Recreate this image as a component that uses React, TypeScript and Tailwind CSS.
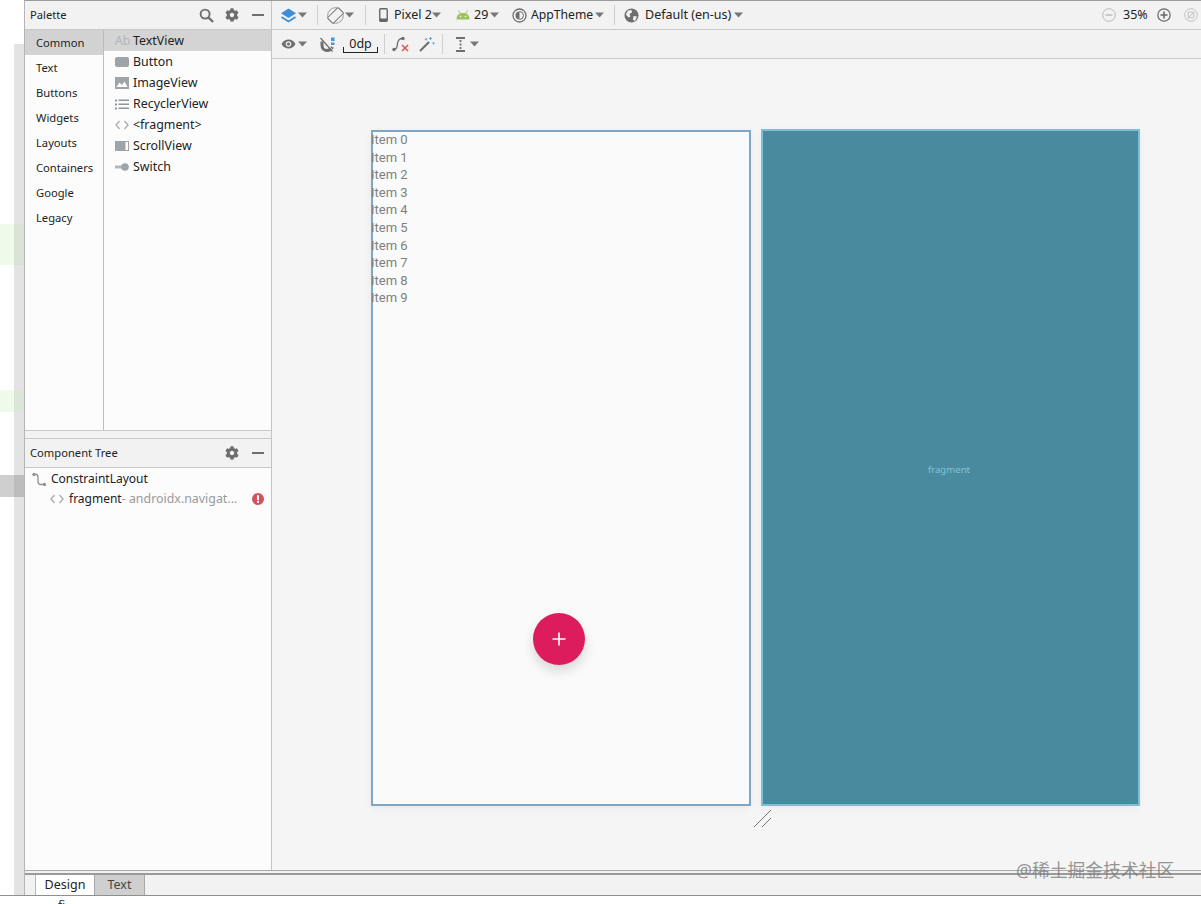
import React from 'react';
import { FaCog } from 'react-icons/fa';

const categories = ['Common', 'Text', 'Buttons', 'Widgets', 'Layouts', 'Containers', 'Google', 'Legacy'];
const items = ['TextView', 'Button', 'ImageView', 'RecyclerView', '<fragment>', 'ScrollView', 'Switch'];
const listItems = ['Item 0', 'Item 1', 'Item 2', 'Item 3', 'Item 4', 'Item 5', 'Item 6', 'Item 7', 'Item 8', 'Item 9'];

const gutter = [
  { h: 'h-[44px]', left: 'bg-white', right: 'bg-white' },
  { h: 'h-[180px]', left: 'bg-white', right: 'bg-[#e3e3e3]' },
  { h: 'h-[41px]', left: 'bg-[#eefbea]', right: 'bg-[#d8e2d5]' },
  { h: 'h-[125px]', left: 'bg-white', right: 'bg-[#e3e3e3]' },
  { h: 'h-[22px]', left: 'bg-[#eefbea]', right: 'bg-[#dbe6d8]' },
  { h: 'h-[63px]', left: 'bg-white', right: 'bg-[#e3e3e3]' },
  { h: 'h-[22px]', left: 'bg-[#cfcfcf]', right: 'bg-[#bdbdbd]' },
  { h: 'flex-1', left: 'bg-white', right: 'bg-[#e3e3e3]' },
];

const Caret = ({ className = '' }: { className?: string }) => (
  <svg width="9" height="6" viewBox="0 0 9 6" className={`shrink-0 ${className}`}>
    <path d="M0 0.5H9L4.5 5.5Z" fill="#777" />
  </svg>
);

const Sep = ({ className = '' }: { className?: string }) => <div className={`w-px h-[20px] bg-[#cfcfcf] shrink-0 ${className}`} />;

const Search = () => (
  <svg width="15" height="15" viewBox="0 0 16 16">
    <circle cx="6.5" cy="6.5" r="4.8" fill="none" stroke="#6e6e6e" strokeWidth="2" />
    <path d="M10 10L15 15" stroke="#6e6e6e" strokeWidth="2.4" />
  </svg>
);

const Minus = () => <div className="w-[12px] h-[2px] bg-[#6e6e6e]" />;

const Chevrons = () => (
  <svg width="14" height="10" viewBox="0 0 14 10">
    <path d="M4.5 1L1 5L4.5 9M9.5 1L13 5L9.5 9" fill="none" stroke="#a8acb0" strokeWidth="1.3" />
  </svg>
);

const PaletteIcon = ({ name }: { name: string }) => {
  if (name === 'TextView') return <span className="w-[14px] text-[12px] leading-none text-[#b0b4b8] whitespace-nowrap">Ab</span>;
  if (name === 'Button') return <div className="w-[14px] h-[10px] rounded-[2px] bg-[#9ea5aa]" />;
  if (name === 'ImageView')
    return (
      <svg width="14" height="12" viewBox="0 0 14 12">
        <rect width="14" height="12" fill="#9ea5aa" />
        <path d="M1.5 10L4.5 5.5L7 8L9.5 4.5L12.5 10Z" fill="#fff" />
      </svg>
    );
  if (name === 'RecyclerView')
    return (
      <svg width="14" height="11" viewBox="0 0 14 11" fill="#8f969b">
        <rect y="0.5" width="2" height="2" />
        <rect x="3.5" y="0.5" width="10.5" height="1.5" />
        <rect y="4.5" width="2" height="2" />
        <rect x="3.5" y="4.5" width="10.5" height="1.5" />
        <rect y="8.5" width="2" height="2" />
        <rect x="3.5" y="8.5" width="10.5" height="1.5" />
      </svg>
    );
  if (name === '<fragment>') return <Chevrons />;
  if (name === 'ScrollView')
    return (
      <svg width="14" height="10" viewBox="0 0 14 10">
        <rect width="14" height="10" fill="#9ea5aa" />
        <rect x="10.5" y="1" width="2.5" height="8" fill="#fff" />
      </svg>
    );
  return (
    <svg width="14" height="8" viewBox="0 0 14 8">
      <rect y="2.5" width="7" height="3" fill="#b3b8bc" />
      <circle cx="10" cy="4" r="3.8" fill="#9ea5aa" />
    </svg>
  );
};

const Toolbar = () => (
  <div className="h-[29px] flex items-center pl-[8px] pr-[3px] bg-[#f2f2f2] border-b border-[#c9c9c9] text-[12.5px] text-[#222] whitespace-nowrap">
    <svg width="17" height="15" viewBox="0 0 17 15" className="shrink-0">
      <path d="M8.5 0.5L16 5.3L8.5 10L1 5.3Z" fill="#3a8fd6" />
      <path d="M1.5 9L8.5 13.5L15.5 9" fill="none" stroke="#3a8fd6" strokeWidth="1.8" />
    </svg>
    <Caret className="ml-[1px]" />
    <Sep className="ml-[10px]" />
    <svg width="17" height="17" viewBox="0 0 17 17" className="ml-[9px] shrink-0">
      <circle cx="8.5" cy="8.5" r="7.8" fill="none" stroke="#999" />
      <rect x="4.5" y="1" width="8" height="15" rx="1" transform="rotate(45 8.5 8.5)" fill="#f2f2f2" stroke="#777" />
    </svg>
    <Caret className="ml-[1px]" />
    <Sep className="ml-[11px]" />
    <svg width="9" height="14" viewBox="0 0 9 14" className="ml-[13px] shrink-0">
      <rect x="0.75" y="0.75" width="7.5" height="12.5" rx="1" fill="none" stroke="#666" strokeWidth="1.4" />
      <rect x="1" y="10.5" width="7" height="2.5" fill="#666" />
    </svg>
    <span className="ml-[6px] w-[38px] pt-px">Pixel 2</span>
    <Caret />
    <svg width="14" height="10" viewBox="0 0 14 10" className="ml-[15px] shrink-0">
      <path d="M0.5 9.5C0.5 5 3 3 7 3C11 3 13.5 5 13.5 9.5Z" fill="#9cc45c" />
      <path d="M2.5 0.5L4.5 3.5M11.5 0.5L9.5 3.5" stroke="#9cc45c" />
      <circle cx="4.5" cy="6.5" r="0.8" fill="#f2f2f2" />
      <circle cx="9.5" cy="6.5" r="0.8" fill="#f2f2f2" />
    </svg>
    <span className="ml-[4px] w-[15px] pt-px">29</span>
    <Caret className="ml-[1px]" />
    <svg width="15" height="15" viewBox="0 0 15 15" className="ml-[13px] shrink-0">
      <circle cx="7.5" cy="7.5" r="6.5" fill="none" stroke="#6e6e6e" strokeWidth="1.3" />
      <path d="M7.5 3.5A4 4 0 0 0 7.5 11.5Z" fill="#6e6e6e" />
      <path d="M7.5 3.5A4 4 0 0 1 7.5 11.5" fill="none" stroke="#6e6e6e" />
    </svg>
    <span className="ml-[4px] w-[64px] pt-px text-[12.2px]">AppTheme</span>
    <Caret />
    <Sep className="ml-[10px]" />
    <svg width="15" height="15" viewBox="0 0 15 15" className="ml-[9px] shrink-0">
      <circle cx="7.5" cy="7.5" r="7" fill="#6e6e6e" />
      <path d="M4 2.5L7.5 2L8 4.5L5.5 6L6.5 8.5L4.5 9.5L1.8 6.5ZM9.5 8L13 8.5L11 13L9 12Z" fill="#f2f2f2" />
    </svg>
    <span className="ml-[6px] w-[85px] pt-px">Default (en-us)</span>
    <Caret className="ml-[4px]" />
    <div className="flex-1" />
    <svg width="14" height="14" viewBox="0 0 14 14" className="shrink-0">
      <circle cx="7" cy="7" r="6.3" fill="none" stroke="#b8b8b8" />
      <path d="M3.5 7H10.5" stroke="#b8b8b8" strokeWidth="1.4" />
    </svg>
    <span className="ml-[7px] w-[27px] pt-px">35%</span>
    <svg width="14" height="14" viewBox="0 0 14 14" className="ml-[7px] shrink-0">
      <circle cx="7" cy="7" r="6.2" fill="none" stroke="#666" strokeWidth="1.2" />
      <path d="M3.5 7H10.5M7 3.5V10.5" stroke="#666" strokeWidth="1.5" />
    </svg>
    <svg width="14" height="14" viewBox="0 0 14 14" className="ml-[13px] shrink-0">
      <circle cx="7" cy="7" r="6.3" fill="none" stroke="#c2c2c2" />
      <rect x="4.2" y="4.2" width="5.6" height="5.6" fill="none" stroke="#c2c2c2" />
      <path d="M5 9L9 5" stroke="#c2c2c2" />
    </svg>
  </div>
);

const SubToolbar = () => (
  <div className="h-[29px] flex items-center pl-[9px] bg-[#f2f2f2] border-b border-[#c9c9c9] text-[12.5px] text-[#222]">
    <svg width="15" height="10" viewBox="0 0 15 10" className="shrink-0">
      <path d="M0.5 5C2.5 1.5 5 0.5 7.5 0.5C10 0.5 12.5 1.5 14.5 5C12.5 8.5 10 9.5 7.5 9.5C5 9.5 2.5 8.5 0.5 5Z" fill="#6e6e6e" />
      <circle cx="7.5" cy="5" r="2.8" fill="#f2f2f2" />
      <circle cx="7.5" cy="5" r="1.6" fill="#6e6e6e" />
    </svg>
    <Caret className="ml-[2px]" />
    <svg width="15" height="15" viewBox="0 0 15 15" className="ml-[13px] shrink-0">
      <path d="M2 4.5V8.5C2 11.5 4.5 13.5 7 13.5C9.5 13.5 11.5 12 12.5 10" fill="none" stroke="#6e6e6e" strokeWidth="3" />
      <path d="M1 0.5L13.5 14" stroke="#f2f2f2" strokeWidth="1" />
      <path d="M0.5 1L12.5 14.5" stroke="#6e6e6e" strokeWidth="1.2" />
      <rect x="11" y="0.5" width="3.5" height="3.5" fill="#3a9bdc" />
      <rect x="11" y="5.5" width="3.5" height="2.5" fill="#3a9bdc" />
    </svg>
    <div className="ml-[8px] w-[35px] h-[17px] relative shrink-0 text-center leading-[15px] border-b border-[#222]">
      0dp
      <div className="absolute left-0 bottom-0 w-px h-[5px] bg-[#222]" />
      <div className="absolute right-0 bottom-0 w-px h-[5px] bg-[#222]" />
    </div>
    <Sep className="ml-[6px]" />
    <svg width="17" height="16" viewBox="0 0 17 16" className="ml-[7px] shrink-0">
      <path d="M1.5 13.5C5 13.5 5 11 5.5 7.5C6 4 7 2.5 10.5 2.5" fill="none" stroke="#6e6e6e" strokeWidth="1.3" />
      <circle cx="2" cy="13.5" r="1.7" fill="#6e6e6e" />
      <circle cx="11" cy="2.5" r="1.7" fill="#6e6e6e" />
      <path d="M10 9L16 15M16 9L10 15" stroke="#e0555c" strokeWidth="1.6" />
    </svg>
    <svg width="16" height="16" viewBox="0 0 16 16" className="ml-[10px] shrink-0">
      <path d="M1 15L10 6" stroke="#6e6e6e" strokeWidth="2.2" />
      <path d="M11.5 1V4M10 2.5H13M14.5 6V8.5M13.3 7.2H15.7" stroke="#58aee0" />
      <path d="M7 2V4.5M5.8 3.2H8.2" stroke="#9a9a9a" />
    </svg>
    <Sep className="ml-[7px]" />
    <svg width="11" height="15" viewBox="0 0 11 15" className="ml-[12px] shrink-0">
      <path d="M1 1H10M1 14H10" stroke="#6e6e6e" strokeWidth="1.8" />
      <path d="M5.5 3V12" stroke="#6e6e6e" strokeWidth="1.8" strokeDasharray="2 1.5" />
    </svg>
    <Caret className="ml-[4px]" />
  </div>
);

const PanelHeader = ({ title, search }: { title: string; search?: boolean }) => (
  <div className="h-[28px] flex items-center pl-[5px] bg-[#f2f2f2] text-[#222] text-[11.2px] shrink-0">
    <span className="flex-1 pt-px">{title}</span>
    {search && <Search />}
    <FaCog className="ml-[11px] w-[14px] h-[14px] text-[#6e6e6e]" />
    <div className="ml-[13px] mr-[7px]">
      <Minus />
    </div>
  </div>
);

export default function App() {
  return (
    <div className="relative w-[1201px] h-[904px] overflow-hidden bg-white font-['Noto_Sans',sans-serif]">
      <div className="flex h-[895px]">
        <div className="w-[24px] flex flex-col shrink-0">
          {gutter.map((g, i) => (
            <div key={i} className={`flex ${g.h}`}>
              <div className={`w-[14px] ${g.left}`} />
              <div className={`w-[10px] ${g.right}`} />
            </div>
          ))}
        </div>

        <div className="flex-1 flex flex-col border-t border-[#9a9a9a] border-l border-l-[#b5b5b5]">
          <div className="flex h-[869px]">
            <div className="w-[247px] flex flex-col border-r border-[#c4c4c4] bg-[#fcfcfc] shrink-0">
              <PanelHeader title="Palette" search />
              <div className="h-[402px] flex border-y border-[#c9c9c9] shrink-0">
                <div className="w-[79px] border-r border-[#bdbdbd] text-[11.2px] text-[#222]">
                  {categories.map((c, i) => (
                    <div key={c} className={`h-[25px] flex items-center pl-[11px] pt-px ${i === 0 ? 'bg-[#d2d2d2]' : ''}`}>
                      {c}
                    </div>
                  ))}
                </div>
                <div className="flex-1 text-[12.4px] text-[#222]">
                  {items.map((it, i) => (
                    <div key={it} className={`h-[21px] flex items-center pl-[11px] pt-px ${i === 0 ? 'bg-[#d4d4d4]' : ''}`}>
                      <div className="w-[18px] flex items-center">
                        <PaletteIcon name={it} />
                      </div>
                      <span>{it}</span>
                    </div>
                  ))}
                </div>
              </div>
              <div className="h-[8px] bg-[#f2f2f2] border-b border-[#c9c9c9] shrink-0" />
              <PanelHeader title="Component Tree" />
              <div className="flex-1 border-t border-[#c9c9c9] text-[12px] text-[#222] whitespace-nowrap">
                <div className="h-[20px] mt-[1px] flex items-center pl-[7px]">
                  <svg width="15" height="15" viewBox="0 0 15 15" className="shrink-0">
                    <path d="M2 2.5H4.5C6 2.5 6 4 6 7V9.5C6 11.5 7 12.5 9 12.5H12" fill="none" stroke="#8e9498" strokeWidth="1.3" />
                    <circle cx="2" cy="2.5" r="1.7" fill="#8e9498" />
                    <circle cx="12.5" cy="12.5" r="1.7" fill="#8e9498" />
                  </svg>
                  <span className="ml-[4px]">ConstraintLayout</span>
                </div>
                <div className="h-[20px] flex items-center pl-[25px]">
                  <Chevrons />
                  <span className="ml-[5px]">fragment</span>
                  <span className="text-[#9a9a9a] text-[12.4px] w-[116px]">- androidx.navigat...</span>
                  <svg width="12" height="12" viewBox="0 0 12 12" className="ml-[14px] shrink-0">
                    <circle cx="6" cy="6" r="6" fill="#d2525e" />
                    <rect x="5" y="2.2" width="2" height="5" fill="#fff" />
                    <rect x="5" y="8" width="2" height="2" fill="#fff" />
                  </svg>
                </div>
              </div>
            </div>

            <div className="flex-1 flex flex-col bg-[#f5f5f5] min-w-0">
              <Toolbar />
              <SubToolbar />
              <div className="flex-1 flex items-start gap-[10px] pl-[99px] pt-[70px]">
                <div className="relative w-[380px] h-[676px] mt-px border-2 border-[#7ea6c8] bg-[#fafafa] shadow-[0_2px_8px_rgba(0,0,0,0.05)] shrink-0">
                  <div className="text-[13px] leading-[17.6px] text-[#7f7f7f] -mt-px -ml-[2px] font-['Roboto',sans-serif]">
                    {listItems.map(t => (
                      <div key={t}>{t}</div>
                    ))}
                  </div>
                  <div className="absolute left-[160px] top-[481px] w-[52px] h-[52px] rounded-full bg-[#dc1c5c] shadow-[0_6px_12px_rgba(0,0,0,0.14)] flex items-center justify-center">
                    <svg width="14" height="14" viewBox="0 0 14 14">
                      <path d="M7 0.5V13.5M0.5 7H13.5" stroke="#fff" strokeWidth="1.6" />
                    </svg>
                  </div>
                  <svg width="20" height="20" viewBox="0 0 20 20" className="absolute left-[380px] top-[677px]">
                    <path d="M1 18L18 1M9 18L18 9" stroke="#555" strokeWidth="0.8" />
                  </svg>
                </div>
                <div className="w-[379px] h-[677px] pt-[5px] pr-[3px] border-2 border-[#7cc0d8] bg-[#4a8a9e] shadow-[0_2px_8px_rgba(0,0,0,0.05)] flex items-center justify-center shrink-0">
                  <span className="text-[9.6px] text-[#7fc6d6]">fragment</span>
                </div>
              </div>
            </div>
          </div>

          <div className="flex-1 flex flex-col bg-[#f2f2f2] border-t border-[#a8a8a8]">
            <div className="h-[2px] mt-[2px] bg-[#9a9a9a] shrink-0" />
            <div className="flex-1 flex pl-[10px] text-[12.5px]">
              <div className="w-[59px] bg-white border-l border-[#b5b5b5] flex items-center justify-center text-[#222]">Design</div>
              <div className="w-[51px] bg-[#cfcfcf] border-x border-[#a8a8a8] flex items-center justify-center text-[#444]">Text</div>
            </div>
          </div>
        </div>
      </div>

      <div className="h-[9px] overflow-hidden border-t border-[#8f8f8f] pl-[58px] text-[12px] leading-[14px] text-[#333] pt-[3px]">fi</div>

      <div className="absolute left-[1016px] top-[858px] text-[17.8px] leading-[24px] text-[#7a7a7a]/80 whitespace-nowrap font-['Noto_Sans','Noto_Sans_CJK_SC',sans-serif]">
        @稀土掘金技术社区
      </div>
    </div>
  );
}
